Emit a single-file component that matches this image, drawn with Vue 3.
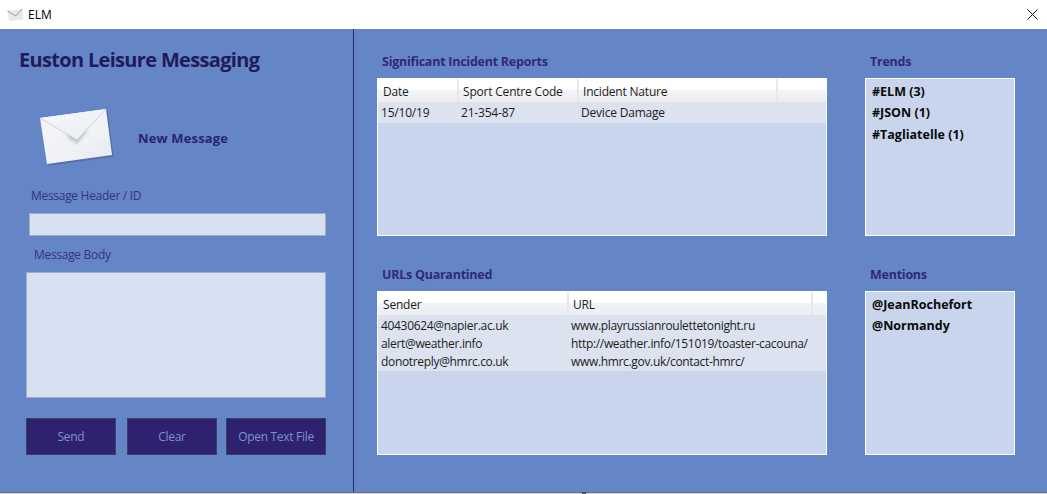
<script setup>
const incidents = [{ date: '15/10/19', code: '21-354-87', nature: 'Device Damage' }]
const urls = [
  { sender: '40430624@napier.ac.uk', url: 'www.playrussianroulettetonight.ru' },
  { sender: 'alert@weather.info', url: 'http://weather.info/151019/toaster-cacouna/' },
  { sender: 'donotreply@hmrc.co.uk', url: 'www.hmrc.gov.uk/contact-hmrc/' }
]
const trends = ['#ELM (3)', '#JSON (1)', '#Tagliatelle (1)']
const mentions = ['@JeanRochefort', '@Normandy']
</script>

<template>
  <div class="window">
    <header class="titlebar">
      <svg class="tb-icon" viewBox="0 0 76 60" width="17" height="14">
        <polygon points="2,12 68,3 74,49 9,58" fill="#e6e8ec" />
        <polyline points="2,12 39,34 68,3" fill="none" stroke="#8a8f98" stroke-width="4" />
      </svg>
      <span class="tb-title">ELM</span>
      <svg class="tb-close" viewBox="0 0 11 11" width="11" height="11">
        <path d="M0.5 0.5L10.5 10.5M10.5 0.5L0.5 10.5" stroke="#111" stroke-width="1" fill="none" />
      </svg>
    </header>

    <main class="main">
      <aside class="sidebar">
        <h1 class="app-title">Euston Leisure Messaging</h1>
        <div class="compose-head">
          <svg class="envelope" viewBox="0 0 76 60" width="76" height="60">
            <defs>
              <linearGradient id="envBody" x1="0" y1="0" x2="1" y2="1">
                <stop offset="0" stop-color="#f4f5f8" />
                <stop offset="0.6" stop-color="#f1f2f6" />
                <stop offset="1" stop-color="#e6e8ee" />
              </linearGradient>
              <linearGradient id="envFlap" x1="0" y1="0" x2="0.6" y2="1">
                <stop offset="0" stop-color="#f8f8fb" />
                <stop offset="1" stop-color="#eceef3" />
              </linearGradient>
              <filter id="envBlur" x="-30%" y="-30%" width="160%" height="160%">
                <feGaussianBlur stdDeviation="1.6" />
              </filter>
            </defs>
            <polygon points="3,13 69,4 75,50 10,59" fill="#4a5f8e" opacity="0.55" transform="translate(0.6 0.8)" />
            <polygon points="2,12 68,3 74,49 9,58" fill="url(#envBody)" />
            <polyline points="9,58 34,31" fill="none" stroke="#e9ebf0" stroke-width="1" />
            <polyline points="74,49 46,26" fill="none" stroke="#e9ebf0" stroke-width="1" />
            <polygon points="39,38 28,30 50,24" fill="#a9adb8" opacity="0.7" filter="url(#envBlur)" />
            <polygon points="2,12 68,3 39,34" fill="url(#envFlap)" />
            <polyline points="2,12 39,34 68,3" fill="none" stroke="#c4c8d1" stroke-width="0.8" />
          </svg>
          <span class="new-message">New Message</span>
        </div>
        <label class="field-label label-header">Message Header / ID</label>
        <input class="header-input" type="text" />
        <label class="field-label label-body">Message Body</label>
        <textarea class="body-input"></textarea>
        <div class="actions">
          <button class="btn btn-send">Send</button>
          <button class="btn btn-clear">Clear</button>
          <button class="btn btn-open">Open Text File</button>
        </div>
      </aside>

      <section class="content">
        <div class="row row-top">
          <div class="block">
            <h2 class="section-title">Significant Incident Reports</h2>
            <div class="panel">
              <div class="grid-row head cols-a">
                <span>Date</span><span>Sport Centre Code</span><span>Incident Nature</span><span></span>
              </div>
              <div v-for="r in incidents" :key="r.code" class="grid-row data cols-a">
                <span>{{ r.date }}</span><span>{{ r.code }}</span><span>{{ r.nature }}</span><span></span>
              </div>
            </div>
          </div>
          <div class="block">
            <h2 class="section-title">Trends</h2>
            <ul class="panel tag-list">
              <li v-for="t in trends" :key="t">{{ t }}</li>
            </ul>
          </div>
        </div>
        <div class="row row-bottom">
          <div class="block">
            <h2 class="section-title">URLs Quarantined</h2>
            <div class="panel">
              <div class="grid-row head cols-b">
                <span>Sender</span><span>URL</span><span></span>
              </div>
              <div v-for="r in urls" :key="r.sender" class="grid-row data cols-b">
                <span>{{ r.sender }}</span><span>{{ r.url }}</span><span></span>
              </div>
            </div>
          </div>
          <div class="block">
            <h2 class="section-title">Mentions</h2>
            <ul class="panel tag-list">
              <li v-for="m in mentions" :key="m">{{ m }}</li>
            </ul>
          </div>
        </div>
      </section>
    </main>
    <footer class="strip"><i class="strip-mark"></i></footer>
  </div>
</template>

<style>
html, body { margin: 0; background: #d4d2cc; overflow: hidden; }
</style>

<style scoped>
* { box-sizing: border-box; }
.window {
  width: 1047px; height: 494px; display: flex; flex-direction: column;
  font-family: "Open Sans", "Noto Sans", sans-serif; font-size: 12px; color: #1c1c1c;
}
.titlebar { height: 29px; background: #fff; display: flex; align-items: center; padding: 0 9px 0 7px; flex: none; }
.tb-icon { flex: none; }
.tb-title { margin-left: 4px; font-size: 12px; color: #000; }
.tb-close { margin-left: auto; }
.main { height: 463px; background: #6486c6; display: flex; flex: none; }
.sidebar { width: 354px; border-right: 1px solid #2a2680; flex: none; display: flex; flex-direction: column; padding: 18px 0 0 0; }
.app-title { margin: 0 0 0 19px; font-size: 20px; line-height: 26px; font-weight: 700; color: #231a5e; letter-spacing: -0.68px; }
.compose-head { display: flex; align-items: center; margin: 33px 0 0 38px; height: 60px; }
.new-message { margin-left: 24px; font-size: 13px; font-weight: 700; color: #2e2270; letter-spacing: 0.15px; position: relative; top: 2px; }
.field-label { color: #3a2f86; font-size: 12px; line-height: 16px; letter-spacing: -0.3px; }
.label-header { margin: 22px 0 0 31px; }
.header-input { width: 297px; height: 23px; margin: 9px 0 0 29px; background: #d8e1f1; border: 1px solid #a3abbf; padding: 0; outline: none; }
.label-body { margin: 11px 0 0 34px; }
.body-input { display: block; width: 300px; height: 126px; margin: 9px 0 0 26px; background: #d8e1f1; border: 1px solid #a3abbf; padding: 0; resize: none; outline: none; }
.actions { display: flex; margin: 20px 0 0 26px; }
.btn { height: 37px; background: #2e2170; border: 1px solid #3d3f63; color: #7b93d2; font: inherit; font-size: 12px; padding: 0; letter-spacing: -0.3px; }
.btn-send, .btn-clear { width: 90px; }
.btn-clear { margin-left: 11px; }
.btn-open { width: 100px; margin-left: 9px; }
.content { flex: 1; padding: 25px 0 0 23px; display: flex; flex-direction: column; gap: 31px; }
.row { display: grid; grid-template-columns: 450px 150px; column-gap: 38px; }
.block { display: flex; flex-direction: column; }
.section-title { margin: 0 0 0 5px; height: 24px; line-height: 15px; font-size: 12.5px; font-weight: 700; color: #33277a; letter-spacing: -0.25px; }
.panel { background: #c9d5ec; border: 1px solid #fff; margin: 0; }
.row-top .panel { height: 158px; }
.row-bottom .panel { height: 164px; }
.grid-row { display: grid; }
.cols-a { grid-template-columns: 81px 120px 199px 1fr; }
.cols-b { grid-template-columns: 191px 244px 1fr; }
.head { height: 25px; background: linear-gradient(#ffffff 0%, #ffffff 45%, #f2f3f6 50%, #eceef2 100%); border-bottom: 2px solid #dfe2e8; }
.head span { padding: 5px 0 0 5px; line-height: 16px; border-right: 2px solid #e6e8ee; color: #1c1c1c; letter-spacing: -0.2px; }
.head span + span { padding-left: 4px; }
.head span:last-child { border-right: 0; }
.data { height: 18px; background: #dce2f0; }
.data span { padding-left: 3px; line-height: 18px; white-space: nowrap; color: #1c1c1c; letter-spacing: -0.33px; }
.data span + span { padding-left: 2px; }
.row-top .data { height: 19px; }
.row-top .data span { letter-spacing: -0.2px; }
.tag-list { list-style: none; padding: 2px 0 0 6px; }
.tag-list li { height: 21.3px; line-height: 21px; font-size: 12.5px; font-weight: 700; color: #0a0a0a; letter-spacing: 0; }
.strip { height: 2px; flex: none; background: #d4d2cc; border-top: 1px solid #6f6f6f; position: relative; }
.strip-mark { position: absolute; left: 582px; top: -1px; width: 4px; height: 2px; background: #555; }
</style>
